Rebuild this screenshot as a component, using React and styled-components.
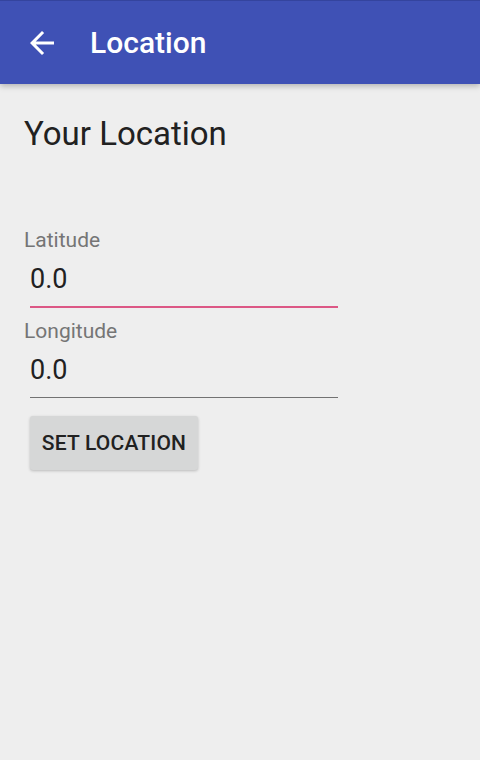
import React from "react";
import styled, { createGlobalStyle } from "styled-components";

const GlobalStyle = createGlobalStyle`
	html, body {
		margin: 0;
		padding: 0;
		background: #EEEEEE;
	}

	body {
		font-family: Roboto, "Noto Sans", "Liberation Sans", sans-serif;
		-webkit-font-smoothing: antialiased;
	}
`;

function BackArrow() {
	return (
		<svg width="36" height="36" viewBox="0 0 24 24" fill="#FFFFFF">
			<path d="M20 11H7.83l5.59-5.59L12 4l-8 8 8 8 1.41-1.41L7.83 13H20v-2z" />
		</svg>
	);
}

export default function App() {
	return (
		<Screen>
			<GlobalStyle />
			<Toolbar>
				<NavButton aria-label="back">
					<BackArrow />
				</NavButton>
				<ToolbarTitle>Location</ToolbarTitle>
			</Toolbar>
			<Content>
				<Heading>Your Location</Heading>
				<Form>
					<Field>
						<Label>Latitude</Label>
						<Input defaultValue="0.0" />
						<Underline focused />
					</Field>
					<Field>
						<Label>Longitude</Label>
						<Input defaultValue="0.0" />
						<Underline />
					</Field>
					<Button>Set Location</Button>
				</Form>
			</Content>
		</Screen>
	);
}

const Screen = styled.div`
	min-height: 760px;
	background: #EEEEEE;
`;

const Toolbar = styled.header`
	position: relative;
	z-index: 1;
	display: flex;
	align-items: center;
	height: 84px;
	box-sizing: border-box;
	padding: 1px 0 0 24px;
	background: #3F51B5;
	border-top: 1px solid #34449E;
	box-shadow: 0 2px 6px rgba(0, 0, 0, 0.26);
`;

const NavButton = styled.button`
	display: flex;
	width: 36px;
	height: 36px;
	padding: 0;
	border: none;
	background: none;
`;

const ToolbarTitle = styled.h1`
	margin: 0 0 0 30px;
	font-size: 30px;
	font-weight: 500;
	line-height: 36px;
	color: #FFFFFF;
`;

const Content = styled.main`
	padding: 30px 24px 0;
`;

const Heading = styled.h2`
	margin: 0;
	font-size: 33px;
	font-weight: 400;
	line-height: 40px;
	color: #212121;
`;

const Form = styled.div`
	display: flex;
	flex-direction: column;
	margin-top: 74px;
`;

const Field = styled.div`
	display: flex;
	flex-direction: column;
	margin-bottom: 11px;
`;

const Label = styled.label`
	font-size: 21px;
	line-height: 24px;
	color: #757575;
`;

const Input = styled.input`
	width: 308px;
	margin: 11px 0 11px 6px;
	padding: 0;
	border: none;
	outline: none;
	background: transparent;
	font-family: inherit;
	font-size: 27px;
	line-height: 32px;
	height: 32px;
	color: #212121;
`;

const Underline = styled.div`
	width: 308px;
	margin-left: 6px;
	height: ${p => (p.focused ? "2px" : "1px")};
	background: ${p => (p.focused ? "#DC5785" : "#727272")};
`;

const Button = styled.button`
	align-self: flex-start;
	width: 168px;
	height: 54px;
	margin: 7px 0 0 6px;
	padding: 0;
	border: none;
	border-radius: 3px;
	background: #D6D7D7;
	box-shadow: 0 1px 3px rgba(0, 0, 0, 0.22);
	font-family: inherit;
	font-size: 21px;
	font-weight: 500;
	letter-spacing: 0.2px;
	text-transform: uppercase;
	color: #212121;
`;
